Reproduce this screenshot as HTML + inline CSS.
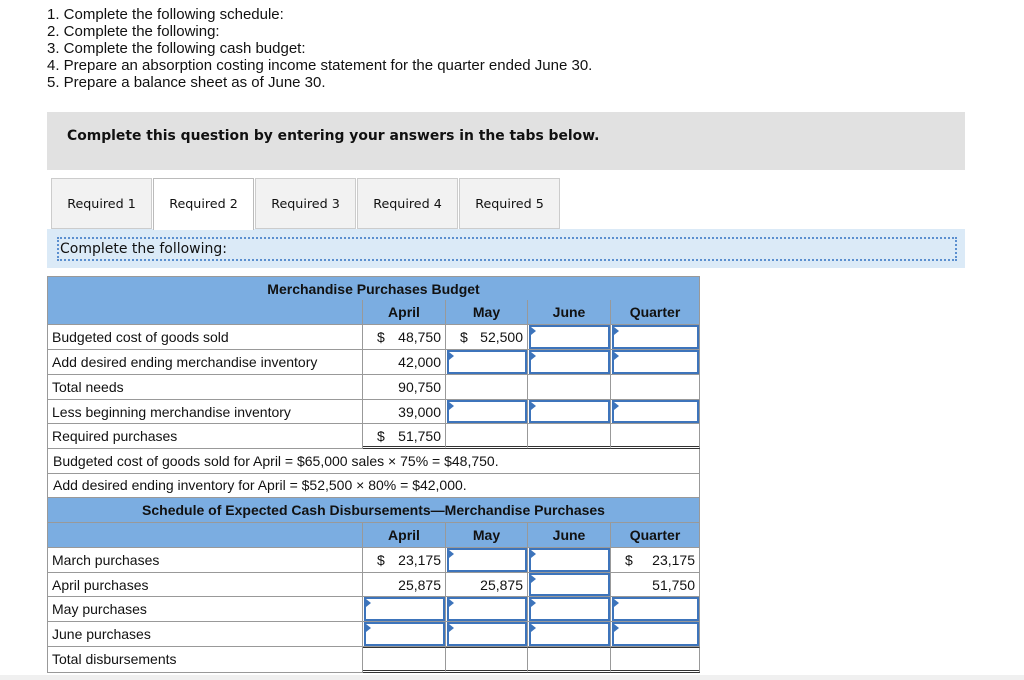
<!DOCTYPE html>
<html><head><meta charset="utf-8"><style>
*{box-sizing:border-box;margin:0;padding:0}
body{width:1024px;height:680px;background:#fff;position:relative;overflow:hidden;font-family:"Liberation Sans",Arial,sans-serif;color:#111}
.q{position:absolute;left:47px;font-size:15px;line-height:17px}
.gray{position:absolute;left:47px;top:112px;width:918px;height:58px;background:#e1e1e1}
.gray b{position:absolute;left:20px;top:16px;font-family:"DejaVu Sans",sans-serif;font-size:13.9px}
.tab{position:absolute;top:178px;width:101px;height:51px;background:#f2f2f2;border:1px solid #ccc;font-family:"DejaVu Sans",sans-serif;font-size:12.7px;text-align:center;line-height:50px}
.tab.on{background:#fff;border-color:#bbb;border-bottom:none;height:52px;z-index:2}
.band{position:absolute;left:47px;top:229px;width:918px;height:39px;background:#dbeaf7}
.dot{position:absolute;left:57px;top:237px;width:900px;height:24px;border:2px dotted #5b8fcf;font-family:"DejaVu Sans",sans-serif;font-size:14px;line-height:20px;padding-left:1px}
.tbl{position:absolute;left:47px;top:276px;width:653px;height:397px;border:1px solid #999;border-top:none;background:#fff}
.r{position:absolute;left:47px;width:653px;display:flex;font-size:14px}
.r>div{height:100%;border-right:1px solid #999;border-bottom:1px solid #999;position:relative;line-height:24px;padding:0 4px}
.r>div:first-child{border-left:1px solid #999}
.c0{width:316px}.c1{width:83px;text-align:right}.c2{width:82px;text-align:right}.c3{width:83px}.c4{width:89px;text-align:right}
.h{background:#7badE1;font-weight:bold}
.h>div{text-align:center!important}
.t{position:absolute;left:47px;width:653px;background:#7bade1;font-weight:bold;font-size:14px;text-align:center;border:1px solid #999;border-bottom:1px solid #999}
.in::after{content:"";position:absolute;left:1px;top:0;right:0;bottom:0;border:2px solid #3d74bb}
.in::before{content:"";position:absolute;left:3px;top:2px;border-left:5px solid #3d74bb;border-top:4px solid transparent;border-bottom:4px solid transparent;z-index:2}
.d{float:left;margin-left:10px}
.dbl{border-bottom:3px double #333!important}
.note{position:absolute;left:47px;width:653px;font-size:14px;padding-left:5px;border:1px solid #999;border-top:none;line-height:24px}
</style></head><body>
<div class="q" style="top:6px">1. Complete the following schedule:<br>2. Complete the following:<br>3. Complete the following cash budget:<br>4. Prepare an absorption costing income statement for the quarter ended June 30.<br>5. Prepare a balance sheet as of June 30.</div>
<div class="gray"><b>Complete this question by entering your answers in the tabs below.</b></div>
<div class="tab" style="left:51px">Required 1</div>
<div class="tab on" style="left:153px">Required 2</div>
<div class="tab" style="left:255px">Required 3</div>
<div class="tab" style="left:357px">Required 4</div>
<div class="tab" style="left:459px">Required 5</div>
<div class="band"></div>
<div class="dot">Complete the following:</div>
<div class="tbl"></div>
<div class="t" style="top:276px;height:25px;line-height:24px">Merchandise Purchases Budget</div>
<div class="r h" style="top:300px;height:25px"><div class="c0"></div><div class="c1">April</div><div class="c2">May</div><div class="c3">June</div><div class="c4">Quarter</div></div>
<div class="r" style="top:325px;height:25px"><div class="c0">Budgeted cost of goods sold</div><div class="c1"><span class="d">$</span>48,750</div><div class="c2"><span class="d">$</span>52,500</div><div class="c3 in"></div><div class="c4 in"></div></div>
<div class="r" style="top:350px;height:25px"><div class="c0">Add desired ending merchandise inventory</div><div class="c1">42,000</div><div class="c2 in"></div><div class="c3 in"></div><div class="c4 in"></div></div>
<div class="r" style="top:375px;height:25px"><div class="c0">Total needs</div><div class="c1">90,750</div><div class="c2"></div><div class="c3"></div><div class="c4"></div></div>
<div class="r" style="top:400px;height:24px"><div class="c0">Less beginning merchandise inventory</div><div class="c1">39,000</div><div class="c2 in"></div><div class="c3 in"></div><div class="c4 in"></div></div>
<div class="r" style="top:424px;height:25px"><div class="c0">Required purchases</div><div class="c1 dbl"><span class="d">$</span>51,750</div><div class="c2 dbl"></div><div class="c3 dbl"></div><div class="c4 dbl"></div></div>
<div class="note" style="top:449px;height:25px">Budgeted cost of goods sold for April = $65,000 sales × 75% = $48,750.</div>
<div class="note" style="top:473px;height:25px">Add desired ending inventory for April = $52,500 × 80% = $42,000.</div>
<div class="t" style="top:498px;height:25px;line-height:24px;border-top:none">Schedule of Expected Cash Disbursements—Merchandise Purchases</div>
<div class="r h" style="top:523px;height:25px"><div class="c0"></div><div class="c1">April</div><div class="c2">May</div><div class="c3">June</div><div class="c4">Quarter</div></div>
<div class="r" style="top:548px;height:25px"><div class="c0">March purchases</div><div class="c1"><span class="d">$</span>23,175</div><div class="c2 in"></div><div class="c3 in"></div><div class="c4"><span class="d">$</span>23,175</div></div>
<div class="r" style="top:573px;height:24px"><div class="c0">April purchases</div><div class="c1">25,875</div><div class="c2">25,875</div><div class="c3 in"></div><div class="c4">51,750</div></div>
<div class="r" style="top:597px;height:25px"><div class="c0">May purchases</div><div class="c1 in"></div><div class="c2 in"></div><div class="c3 in"></div><div class="c4 in"></div></div>
<div class="r" style="top:622px;height:25px"><div class="c0">June purchases</div><div class="c1 in"></div><div class="c2 in"></div><div class="c3 in"></div><div class="c4 in"></div></div>
<div class="r" style="top:647px;height:26px"><div class="c0">Total disbursements</div><div class="c1 dbl" style="border-top:1px solid #333"></div><div class="c2 dbl" style="border-top:1px solid #333"></div><div class="c3 dbl" style="border-top:1px solid #333"></div><div class="c4 dbl" style="border-top:1px solid #333"></div></div>
<div style="position:absolute;left:0;top:675px;width:1024px;height:5px;background:#f0f0f0"></div>
</body></html>
